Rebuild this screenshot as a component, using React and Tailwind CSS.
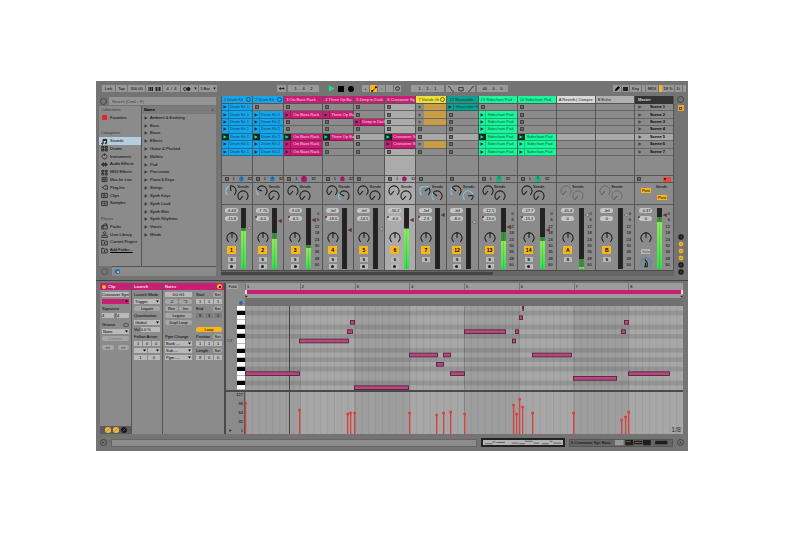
import { useState } from 'react'

const PINK = 'bg-[#c71f73]'
const BLUE = 'bg-[#17a5ea]'
const GREEN = 'bg-[#1bf59b]'

// cells: c = clip, p = playing clip, s = stop slot, g = group slot, . = empty return slot
const TRACKS = [
  { id: '1', name: 'Drum Kit', clip: 'Drum Kit 1', color: BLUE, ink: 'text-[#083f66]', cells: 'ccccpcc', pie: '#1c79c4', peak: '-6.63', vol: '-15.8', level: 62, dim: 68, fader: 29, a: 130, b: 0, group: true },
  { id: '2', name: 'Drum Kit', clip: 'Drum Kit 2', color: BLUE, ink: 'text-[#083f66]', cells: 'scccpcc', pie: '#1c79c4', peak: '-7.70', vol: '-6.0', level: 50, dim: 59, fader: 18, red: true, a: 70, b: 0, group: true },
  { id: '3', name: 'Oxi Bass Rack', clip: 'Oxi Bass Rack', color: PINK, ink: 'text-[#ffdcec]', cells: 'scsspcc', wide: true, pie: '#b01868', peak: '-9.03', vol: '-6.5', level: 34, dim: 40, fader: 16, red: true, a: 0, b: 0 },
  { id: '4', name: 'Three Op Ba', clip: 'Three Op Ba', color: PINK, ink: 'text-[#ffdcec]', cells: 'scsspss', pie: '#b01868', peak: '-Inf', vol: '-18.0', level: 0, dim: 0, fader: 33, red: true, a: 0, b: 80 },
  { id: '5', name: 'Deep in Dark', clip: 'Deep in Dark', color: PINK, ink: 'text-[#ffdcec]', cells: 'sscssss', peak: '-Inf', vol: '-14.5', level: 0, dim: 0, fader: 31, a: 0, b: 0 },
  { id: '6', name: 'Crossover Sy', clip: 'Crossover S', color: PINK, ink: 'text-[#ffdcec]', cells: 'sssspcs', pie: '#b01868', peak: '-10.2', vol: '-6.0', level: 66, dim: 68, fader: 16, red: true, a: 0, b: 0, selected: true },
  { id: '7', name: 'Vocals Gr', clip: '', color: 'bg-[#eee03c]', ink: 'text-[#3d3a10]', cells: 'gggssgs', peak: '-Inf', vol: '-2.6', level: 0, dim: 0, fader: 8, red: true, a: 190, b: 90, noArm: true, group: true },
  { id: '12', name: 'Wavetable', clip: 'Wavetable R', color: 'bg-[#109e90]', ink: 'text-[#05443e]', cells: 'cssssss', peak: '-Inf', vol: '-8.0', level: 0, dim: 0, fader: 19, a: 90, b: 220 },
  { id: '13', name: 'Sidechain Pad', clip: 'Sidechain Pad', color: GREEN, ink: 'text-[#08633e]', cells: 'scccpcc', wide: true, pie: '#14b878', peak: '-12.5', vol: '-13.0', level: 46, dim: 61, fader: 28, red: true, a: 0, b: 0 },
  { id: '14', name: 'Sidechain Pad', clip: 'Sidechain Pad', color: GREEN, ink: 'text-[#08633e]', cells: 'sssspcc', wide: true, pie: '#14b878', peak: '-17.7', vol: '-15.1', level: 46, dim: 53, fader: 32, red: true, a: 0, b: 0 },
  { id: 'A', name: 'Reverb | Compre', clip: '', color: 'bg-[#d9d9d9]', ink: 'text-[#222]', cells: '.......', wide: true, ret: true, peak: '-41.4', vol: '0', level: 3, dim: 17, fader: 8, a: 0, b: 0 },
  { id: 'B', name: 'Echo', clip: '', color: 'bg-[#b0b0b0]', ink: 'text-[#222]', cells: '.......', wide: true, ret: true, peak: '-Inf', vol: '0', level: 0, dim: 0, fader: 8, a: 0, b: 0 },
]

const BROWSER = [
  ['head', 'Collections'], ['red', 'Favorites'], ['', ''], ['head', 'Categories'],
  ['note', 'Sounds'], ['grid', 'Drums'], ['clock', 'Instruments'], ['wave', 'Audio Effects'],
  ['midi', 'MIDI Effects'], ['max', 'Max for Live'], ['plug', 'Plug-Ins'], ['clip', 'Clips'],
  ['sample', 'Samples'], ['', ''], ['head', 'Places'], ['packs', 'Packs'], ['user', 'User Library'],
  ['folder', 'Current Project'], ['folder', 'Add Folder...'],
]

const SOUNDS = [
  'Ambient & Evolving', 'Bass', 'Brass', 'Effects', 'Guitar & Plucked', 'Mallets', 'Pad', 'Percussive',
  'Piano & Keys', 'Strings', 'Synth Keys', 'Synth Lead', 'Synth Misc', 'Synth Rhythmic', 'Voices', 'Winds',
]

// start, end, row
const NOTES = [
  [0, 54, 14], [54, 103, 7], [102, 107, 5], [105, 109, 3], [109, 163, 17], [164, 192, 10], [191, 198, 12],
  [198, 205, 10], [205, 219, 14], [219, 260, 5], [267, 270, 7], [270, 273, 5], [274, 277, 2], [277, 278, 0],
  [287, 326, 10], [328, 371, 15], [376, 380, 5], [379, 383, 3], [383, 424, 14],
]

const VELOCITIES = [
  [0, 31], [54, 24], [102, 20], [105, 21], [109, 21], [164, 21], [191, 19], [198, 21], [205, 22], [219, 20],
  [268, 29], [271, 20], [274, 35], [277, 27], [287, 21], [328, 21], [376, 14], [380, 17], [383, 22],
]

const BLACK_ROWS = [1, 4, 6, 9, 11, 13, 16]
const ROW_H = 84 / 18
const BAR_W = 438 / 8

const ICONS = {
  note: <path d="M3 8V2h5v5M3 8a1 1 0 1 1-1-1h1M8 7.500a1 1 0 1 1-1-1h1M3 3.500h5" strokeWidth="1.400" />,
  grid: <path d="M1 2h3v2.500H1zM6 2h3v2.500H6zM1 6h3v2.500H1zM6 6h3v2.500H6z" strokeWidth="1.300" />,
  clock: <path d="M5 1.500a3.500 3.500 0 1 0 .1 0M5 1v3" />,
  wave: <path d="M0 5h1M2 3v4M3.500 2v6M5 3.500v3M6.500 2v6M8 3v4M9 5h1" strokeWidth="1.200" />,
  midi: <path d="M1 2h3v2H1zM6 2h3v2H6zM1 6.500h3v2H1zM6 6.500h3v2H6zM2.500 4v2M7.500 4v2" />,
  max: <path d="M1.500 2h7v6h-7zM3.500 4h3v2h-3z" />,
  plug: <path d="M1 5h2M3 5l2-2.500h4v5H5z" />,
  clip: <path d="M1 2h8v6H1zM4 3.500v3L6.500 5z" />,
  sample: <path d="M1 2h8v6H1zM3 4v2M5 3.500v3M7 4v2" />,
  packs: <path d="M3 4h6v4.500H1V4h2L4.500 1.500h4L8 4M3 4v4" />,
  user: <path d="M5 1a1.800 1.800 0 1 0 .1 0M1 9V7.500Q1 6 3 6h4q2 0 2 1.500V9z" />,
  folder: <path d="M1 8.500V2h3l1 1h4v5.500zM5 4.500v2.500M4 6h2" />,
}

function BrowserIcon({ name }) {
  if (name === 'red') return <span className="mx-px size-[5px] bg-[#e0262c]" />
  return (
    <svg viewBox="0 0 10 10" className="size-[7px] shrink-0" fill="none" stroke="#1c1c1c" strokeWidth="1.100">
      {ICONS[name]}
    </svg>
  )
}

function Arrow({ color = '#222', className = 'size-[4px]' }) {
  return (
    <svg viewBox="0 0 8 8" className={`${className} shrink-0`}>
      <path d="M1 0.500L7.500 4L1 7.500z" fill={color} />
    </svg>
  )
}

function arc(cx, cy, r, from, to) {
  const p = deg => {
    const a = (deg * Math.PI) / 180
    return `${(cx + r * Math.sin(a)).toFixed(2)} ${(cy - r * Math.cos(a)).toFixed(2)}`
  }
  return `M${p(from)}A${r} ${r} 0 ${to - from > 180 ? 1 : 0} 1 ${p(to)}`
}

function Knob({ amount = 0, pan = false, faded = false, className = '' }) {
  const ink = faded ? '#5c5c5c' : '#1c1c1c'
  const deg = pan ? 0 : -140 + amount
  const a = (deg * Math.PI) / 180
  return (
    <svg viewBox="0 0 20 20" className={`${className} size-[12px] shrink-0`} fill="none">
      <path d={arc(10, 10, 8.5, -140, 140)} stroke={ink} strokeWidth={faded ? 1.2 : 1.8} />
      {amount > 0 && <path d={arc(10, 10, 8.5, -140, deg)} stroke="#8cc4e0" strokeWidth="2.500" />}
      <path d={`M10 10L${10 + 8 * Math.sin(a)} ${10 - 8 * Math.cos(a)}`} stroke={ink} strokeWidth="1.800" />
      {pan && <path d="M8 0h4l-2 2z" fill={ink} />}
    </svg>
  )
}

function Cell({ kind, track, row, onLaunch }) {
  const bg = track.selected ? 'bg-[#ababab]' : row === 4 ? 'bg-[#a9a9a9]' : 'bg-[#8b8b8b]'
  if (kind === '.') return <div className={`${bg} border-b border-[#666]`} />
  if (kind === 's') {
    return (
      <button aria-label={`Stop ${track.id} scene ${row + 1}`} className={`${bg} flex items-center border-b border-[#666] pl-[2px]`}>
        <span className="size-[4px] border border-[#444] bg-[#666]" />
      </button>
    )
  }
  if (kind === 'g') {
    return (
      <div className={`${bg} flex items-center border-b border-[#666] pl-[2px]`}>
        <Arrow color="#555" />
        <span className="ml-[2px] h-full flex-1 bg-[#c89d45]" />
      </div>
    )
  }
  const playing = kind === 'p'
  return (
    <button onClick={onLaunch} className={`${track.color} flex min-w-0 items-center border-b border-black/30 text-left`}>
      <span className={`${playing ? 'bg-[#0d2b20]' : ''} flex h-full w-[7px] shrink-0 items-center justify-center border-r border-black/20`}>
        <Arrow color={playing ? '#2fe08c' : '#10304a'} />
      </span>
      <span className={`${track.ink} ${track.wide ? 'pl-[2px]' : 'pl-px'} whitespace-nowrap`}>{track.clip}</span>
    </button>
  )
}

function Scale() {
  return (
    <div className="flex flex-1 flex-col justify-between pt-[4px] pr-[3px] pb-[3px] text-right leading-none">
      {['0', '6', '12', '18', '24', '30', '36', '48', '60'].map(n => <span key={n}>{n}</span>)}
    </div>
  )
}

function Meter({ level, dim, fader, red }) {
  return (
    <div className="relative mb-px flex w-[5px] shrink-0 flex-col justify-end bg-[#242424]">
      <div className="bg-[#3f8f3e]" style={{ height: `${dim - level}%` }} />
      <div className="bg-linear-to-t from-[#26dd4c] to-[#8aec5c]" style={{ height: `${level}%` }} />
      <span className="absolute inset-y-0 left-[2px] w-px bg-black/10" />
      <svg viewBox="0 0 6 6" className="absolute left-[6px] size-[4px]" style={{ top: `${fader}%` }}>
        <path d="M0 3L5.500 0.300v5.400z" fill={red ? '#7d2432' : '#bcbcbc'} stroke="#4a4a4a" strokeWidth="0.700" />
      </svg>
    </div>
  )
}

function Pill({ children, dot }) {
  return (
    <span className="relative h-[5px] w-[13px] rounded-full bg-[#c6c6c6] text-center leading-[5px]">
      {children}
      {dot && <i className="absolute top-0 -left-px size-[2px] rounded-full bg-[#8d2338]" />}
    </span>
  )
}

function Track({ track, active, onToggle, onLaunch }) {
  const light = track.selected
  const side = track.wide ? 'w-[22px]' : 'w-[19px]'
  return (
    <section className={`${light ? 'bg-[#ababab]' : 'bg-[#8b8b8b]'} flex min-w-0 flex-col border-r border-[#555]`}>
      <h3 className={`${track.color} ${track.ink} flex h-[8px] items-center border-b border-[#555] pl-[2px] whitespace-nowrap`}>
        <span className="min-w-0 flex-1">{track.id} {track.name}</span>
        {track.group && <span className="mr-px size-[5px] shrink-0 rounded-full border border-current opacity-70" />}
      </h3>
      <div className="grid h-[52px] grid-rows-7">
        {track.cells.split('').map((kind, i) => (
          <Cell key={i} kind={kind} track={track} row={i} onLaunch={onLaunch} />
        ))}
      </div>
      <div className="h-[20px] border-b border-[#555]" />
      <div className="flex h-[7px] items-center gap-[4px] border-b border-[#555] pl-[3px]">
        {!track.ret && <span className="size-[4px] border border-[#444] bg-[#666]" />}
        {track.pie && (
          <>
            <span>1</span>
            <svg viewBox="0 0 10 10" className="size-[6px]">
              <circle cx="5" cy="5" r="5" fill={track.pie} />
              <path d="M5 5V0" stroke="#333" />
            </svg>
            <span>32</span>
          </>
        )}
      </div>
      <div className="flex h-[22px] border-b border-[#555] pl-[3px]">
        <Knob amount={track.a} faded={track.ret} className="mt-[2px]" />
        <div className="flex flex-col items-center pt-[2px]">
          <span>Sends</span>
          <Knob amount={track.b} faded={track.ret} className="mt-px" />
        </div>
      </div>
      <div className="flex h-[65px] pt-[3px]">
        <div className={`${side} flex flex-col items-center`}>
          <Pill>{track.peak}</Pill>
          <span className="h-[3px]" />
          <Pill dot={track.red}>{track.vol}</Pill>
          <Knob pan className="mt-[11px] mb-[2px]" />
          <button
            onClick={onToggle}
            aria-pressed={active}
            className={`${active ? 'bg-[#f9b51c]' : 'bg-[#9a9a9a]'} h-[8px] w-[9px] text-[5px] leading-none font-bold`}
          >
            {track.id}
          </button>
          <button className="mt-[3px] h-[5px] w-[8px] bg-[#b9b9b9] leading-none font-bold">S</button>
          {!track.ret && !track.noArm && (
            <button aria-label={`Arm track ${track.id}`} className="mt-[2px] flex h-[5px] w-[8px] items-center justify-center bg-[#b9b9b9]">
              <span className="size-[3px] rounded-full bg-[#222]" />
            </button>
          )}
        </div>
        <Meter {...track} />
        {track.wide && <Scale />}
      </div>
    </section>
  )
}

function Master() {
  return (
    <section className="flex min-w-0 flex-col border-r border-[#555] bg-[#8b8b8b]">
      <h3 className="flex h-[8px] items-center bg-[#333] pl-[3px] font-bold text-[#d0d0d0]">Master</h3>
      <div className="grid h-[52px] grid-rows-7">
        {[1, 2, 3, 4, 5, 6, 7].map(n => (
          <button key={n} className={`${n === 5 ? 'bg-[#a9a9a9]' : ''} flex items-center border-b border-[#666] pl-[3px] font-bold`}>
            <Arrow color="#444" />
            <span className="flex-1 text-center">Scene {n}</span>
          </button>
        ))}
      </div>
      <div className="h-[20px] border-b border-[#555]" />
      <div className="flex h-[7px] items-center justify-between border-b border-[#555] px-[2px]">
        <span className="size-[4px] border border-[#444] bg-[#666]" />
        <span className="flex h-[5px] w-[8px] items-center bg-[#e44a3c] pl-px"><i className="size-[2px] bg-[#611]" /></span>
      </div>
      <div className="flex h-[22px] flex-col border-b border-[#555] px-[6px] pt-[2px]">
        <div className="flex items-start justify-between">
          <button className="mt-[3px] h-[5px] w-[10px] bg-[#f9b51c] leading-[5px]">Post</button>
          <span>Sends</span>
        </div>
        <button className="mt-[2px] h-[5px] w-[10px] self-end bg-[#f9b51c] leading-[5px]">Post</button>
      </div>
      <div className="flex h-[65px] pt-[3px]">
        <div className="flex w-[22px] flex-col items-center">
          <Pill>-0.37</Pill>
          <span className="h-[3px]" />
          <Pill dot>0</Pill>
          <Knob pan className="mt-[11px]" />
          <button className="mt-[5px] h-[5px] w-[9px] bg-[#b9b9b9] leading-[5px] text-[#555]">Solo</button>
          <svg viewBox="0 0 20 20" className="mt-[3px] size-[12px]" fill="none">
            <path d={arc(10, 10, 8.5, -140, 140)} stroke="#4e86bd" strokeWidth="2" />
            <path d="M8 4l4 5v7M9 9v6M7 16h6" stroke="#222" strokeWidth="2" />
          </svg>
        </div>
        <Meter level={77} dim={86} fader={8} red />
        <Scale />
      </div>
    </section>
  )
}

function Box({ children, className = '' }) {
  return <span className={`${className} flex h-[7px] items-center justify-center bg-[#999] whitespace-nowrap`}>{children}</span>
}

function Toolbar() {
  const [playing, setPlaying] = useState(true)
  return (
    <header className="flex h-[15px] items-center pl-[6px] pr-[2px]">
      <div className="flex gap-px">
        <button className="h-[7px] w-[13px] bg-[#999]">Link</button>
        <button className="h-[7px] w-[11px] bg-[#999]">Tap</button>
        <Box className="w-[17px]">100.00</Box>
        <Box className="w-[16px] gap-[2px]">
          <svg viewBox="0 0 24 8" className="h-[4px] w-[13px]" fill="#222"><path d="M0 0h2v8H0zM3 0h3v8H3zM7 0h2v8H7zM14 0h3v8h-3zM18 0h2v8h-2zM21 0h3v8h-3z" /></svg>
        </Box>
        <Box className="w-[17px]">4 &nbsp;/ &nbsp;4</Box>
        <Box className="w-[17px] gap-[3px]">
          <svg viewBox="0 0 16 8" className="h-[4px] w-[8px]"><circle cx="4" cy="4" r="3" fill="none" stroke="#222" strokeWidth="1.500" /><circle cx="11" cy="4" r="4" fill="#222" /></svg>
          <Arrow className="size-[3px] rotate-90" />
        </Box>
        <Box className="w-[18px] gap-[3px]">1 Bar <Arrow className="size-[3px] rotate-90" /></Box>
      </div>
      <div className="ml-[60px] flex items-center gap-[2px]">
        <Box className="w-[9px]"><svg viewBox="0 0 12 6" className="h-[3px] w-[6px]"><path d="M0 3h8" stroke="#222" strokeWidth="1.500" /><path d="M0 3l4-3v6z" fill="#222" /><circle cx="9" cy="3" r="2" fill="#222" /></svg></Box>
        <Box className="w-[31px]">1 . &nbsp; 4 . &nbsp; 2</Box>
        <button onClick={() => setPlaying(!playing)} aria-label="Play" className="ml-[6px] flex size-[8px] items-center justify-center">
          <Arrow color={playing ? '#1de28a' : '#222'} className="size-[7px]" />
        </button>
        <button aria-label="Stop" className="flex size-[8px] items-center justify-center"><span className="size-[6px] bg-black" /></button>
        <button aria-label="Record" className="flex size-[8px] items-center justify-center"><span className="size-[6px] rounded-full bg-black" /></button>
        <div className="ml-[5px] flex gap-px">
          <Box className="w-[7px]">+</Box>
          <span className="flex h-[7px] w-[7px] items-center justify-center bg-[#f9b51c]">
            <svg viewBox="0 0 8 8" className="size-[6px]"><path d="M1 7L4 5L7 1" stroke="#222" fill="none" /><circle cx="1.500" cy="6.500" r="1.300" /><circle cx="6.500" cy="1.500" r="1.300" /></svg>
          </span>
          <Box className="w-[7px] text-[#555]">+</Box>
          <Box className="w-[7px] text-[#777]">--</Box>
          <Box className="w-[7px]"><svg viewBox="0 0 8 8" className="size-[5px]"><circle cx="4" cy="4" r="3" fill="none" stroke="#222" strokeWidth="1.500" /></svg></Box>
        </div>
        <Box className="ml-[8px] w-[33px]">1 . &nbsp; 1 . &nbsp; 1</Box>
        <Box className="w-[29px] gap-[4px]">
          <svg viewBox="0 0 8 8" className="size-[6px]" fill="none" stroke="#222"><path d="M0 1h2l4 6h2" /></svg>
          <svg viewBox="0 0 8 8" className="size-[6px]" fill="none" stroke="#222"><path d="M3 6H1V2h6v4H5M4 5v3" /></svg>
          <svg viewBox="0 0 8 8" className="size-[6px]" fill="none" stroke="#222"><path d="M0 7h2l4-6h2" /></svg>
        </Box>
        <Box className="w-[31px]">40 . &nbsp; 0 . &nbsp; 0</Box>
      </div>
      <div className="ml-auto flex gap-px">
        <Box className="w-[8px]"><svg viewBox="0 0 8 8" className="size-[6px]"><path d="M1 7l1-3 4-4 2 2-4 4z" /></svg></Box>
        <Box className="w-[7px]"><span className="h-[4px] w-[5px] bg-[#222]" /></Box>
        <button className="h-[7px] w-[11px] bg-[#999]">Key</button>
        <Box className="w-[3px]" />
        <button className="h-[7px] w-[12px] bg-[#999]">MIDI</button>
        <Box className="w-[15px] border-l-3 border-[#f3b435]">18 %</Box>
        <Box className="w-[7px]">D</Box>
        <Box className="w-[3px]" />
      </div>
    </header>
  )
}

function Browser() {
  const [active, setActive] = useState('Sounds')
  return (
    <aside className="flex w-[117px] shrink-0 flex-col">
      <div className="flex h-[10px] items-center gap-[2px] pl-px">
        <span className="size-[7px] rounded-full border border-[#444]" />
        <input
          aria-label="Search"
          placeholder="Search (Cmd + F)"
          className="h-[8px] min-w-0 flex-1 bg-[#949494] px-[3px] placeholder-[#3f3f3f] outline-none"
        />
      </div>
      <div className="flex flex-1 bg-[#8b8b8b]">
        <nav className="grid h-[148px] w-[42px] shrink-0 grid-rows-19">
          {BROWSER.map(([icon, label], i) => {
            if (!icon) return <span key={i} />
            if (icon === 'head') return <h2 key={i} className="flex items-center pl-[2px] text-[#3c3c3c]">{label}</h2>
            return (
              <button
                key={i}
                onClick={() => setActive(label)}
                className={`${active === label ? 'bg-[#b5cddd]' : ''} flex items-center gap-[2px] pl-[2px] text-left whitespace-nowrap`}
              >
                <BrowserIcon name={icon} />
                <span className={label.startsWith('Add') ? 'underline' : ''}>{label}</span>
              </button>
            )
          })}
        </nav>
        <div className="flex-1 border-l border-[#555]">
          <ul className="grid h-[133px] grid-rows-17">
            <li className="flex items-center justify-between bg-[#7b7b7b] px-[2px] font-bold">
              Name <Arrow color="#555" className="size-[3px] -rotate-90" />
            </li>
            {SOUNDS.map(name => (
              <li key={name} className="flex items-center gap-[2px] pl-[2px]">
                <Arrow color="#3a3a3a" />{name}
              </li>
            ))}
          </ul>
        </div>
      </div>
      <div className="flex h-[10px] items-center gap-[4px] pl-[2px]">
        <span className="size-[7px] rounded-full border border-[#555]" />
        <div className="flex h-full flex-1 items-center border-t border-[#555] bg-[#8b8b8b] pl-[3px]">
          <span className="flex size-[5px] items-center justify-center rounded-full bg-[#2468b0]"><i className="size-[2px] bg-[#8fbde8]" /></span>
        </div>
      </div>
    </aside>
  )
}

function Session() {
  const [off, setOff] = useState([])
  const [, setLaunched] = useState(null)
  function toggle(id) {
    setOff(off.includes(id) ? off.filter(x => x !== id) : [...off, id])
  }
  return (
    <div className="flex min-w-0 flex-1">
      <div className="min-w-0 flex-1">
        <div className="grid grid-cols-[31fr_31fr_39fr_31fr_31fr_31fr_31fr_31fr_39fr_39fr_39fr_39fr_39fr] border-l border-[#555]">
          {TRACKS.map(t => (
            <Track key={t.id} track={t} active={!off.includes(t.id)} onToggle={() => toggle(t.id)} onLaunch={() => setLaunched(t.id)} />
          ))}
          <Master />
        </div>
        <div className="h-[6px] border-t border-[#4a4a4a] bg-[#666] pt-px">
          <div className="h-[3px] w-3/5 bg-[#444]" />
        </div>
      </div>
      <div className="flex w-[13px] shrink-0 flex-col items-center gap-[2px] pb-px">
        <span className="size-[7px] rounded-full border border-[#444]" />
        <span className="flex size-[6px] items-center justify-center bg-[#e2a93a]"><i className="size-[3px] border border-[#6b5220]" /></span>
        <div className="mt-auto flex flex-col gap-px">
          {['#1c1c1c', '#f2b93b', '#f2b93b', '#f2b93b', '#1c1c1c', '#1c1c1c'].map((c, i) => (
            <svg key={i} viewBox="0 0 10 10" className="size-[6px]">
              <circle cx="5" cy="5" r="4.500" fill={c} stroke="#333" strokeWidth="0.500" />
              <path d="M3 5h4" stroke={c === '#1c1c1c' ? '#777' : '#6b5220'} />
            </svg>
          ))}
        </div>
      </div>
    </div>
  )
}

function Line({ children }) {
  return <div className="flex h-[7px] items-center gap-px whitespace-nowrap">{children}</div>
}

function Btn({ children, on }) {
  return (
    <button className={`${on ? 'bg-[#f9b51c]' : 'bg-[#a6a6a6]'} h-[5px] min-w-0 flex-1 rounded-[2px] leading-[5px]`}>
      {children}
    </button>
  )
}

function Field({ label, value }) {
  return (
    <input
      aria-label={label}
      defaultValue={value}
      className="h-[5px] min-w-0 flex-1 bg-[#b9b9b9] outline-none"
    />
  )
}

function Pick({ label, value, color = 'bg-[#b9b9b9]' }) {
  return (
    <span className={`${color} relative flex h-[5px] min-w-0 flex-1 items-center`}>
      <select aria-label={label} className="h-full w-full appearance-none px-px leading-none">
        <option>{value}</option>
      </select>
      <svg viewBox="0 0 6 6" className="pointer-events-none absolute right-px size-[3px]"><path d="M0 1h6L3 5z" /></svg>
    </span>
  )
}

function Title({ children, set }) {
  return (
    <Line>
      <span className="flex-1">{children}</span>
      {set && <button className="h-[5px] w-[9px] rounded-[2px] bg-[#a8a8a8] leading-[5px]">Set</button>}
    </Line>
  )
}

function Triple({ label, values, dark }) {
  return (
    <Line>
      {values.map((v, i) => (
        <input
          key={i}
          aria-label={`${label} ${i + 1}`}
          defaultValue={v}
          className={`${dark ? 'bg-[#7c7c7c]' : 'bg-[#b9b9b9]'} h-[5px] min-w-0 flex-1 text-center outline-none`}
        />
      ))}
    </Line>
  )
}

function ClipPanel() {
  return (
    <div className="flex w-[124px] shrink-0 bg-[#8b8b8b]">
      <section className="flex w-[32px] flex-col border-r border-[#555]">
        <h3 className={`${PINK} flex h-[7px] items-center gap-[2px] pl-[2px] font-bold text-[#fbd9ea]`}>
          <span className="size-[4px] rounded-full bg-[#f9b51c]" />Clip
        </h3>
        <div className="px-[2px] pt-px">
          <Line><Field label="Clip name" value="Crossover Synt" /></Line>
          <Line><Pick label="Clip color" value="" color={PINK} /></Line>
          <Title>Signature</Title>
          <Line><Field label="Numerator" value="4" />/<Field label="Denominator" value="4" /></Line>
          <div className="pt-[2px]">
            <Line><span className="flex-1">Groove</span><span className="h-[4px] w-[6px] rounded-full border border-[#555]" /></Line>
            <Line><Pick label="Groove" value="None" /></Line>
            <Line><Btn><span className="text-[#777]">Commit</span></Btn></Line>
          </div>
          <div className="pt-[2px]">
            <Line><Btn>&lt;&lt;</Btn><span className="w-[2px]" /><Btn>&gt;&gt;</Btn></Line>
          </div>
        </div>
        <div className="mt-auto flex h-[8px] items-center justify-center gap-[2px] bg-[#5c5c5c]">
          {['#f2b93b', '#f2b93b', '#1c1c1c'].map((c, i) => (
            <svg key={i} viewBox="0 0 10 10" className="size-[6px]">
              <circle cx="5" cy="5" r="5" fill={c} />
              <path d="M3 7l4-4" stroke={i === 2 ? '#888' : '#7a5a1a'} />
            </svg>
          ))}
        </div>
      </section>
      <section className="w-[31px] border-r border-[#555]">
        <h3 className={`${PINK} flex h-[7px] items-center pl-[2px] font-bold text-[#fbd9ea]`}>Launch</h3>
        <div className="px-[2px] pt-px">
          <Title>Launch Mode</Title>
          <Line><Pick label="Launch mode" value="Trigger" /></Line>
          <Line><Btn>Legato</Btn></Line>
          <Title>Quantization</Title>
          <Line><Pick label="Quantization" value="Global" /></Line>
          <Line>Vel <Field label="Velocity amount" value="0.0 %" /></Line>
          <Title>Follow Action</Title>
          <Triple label="Follow time" values={['1', '0', '0']} />
          <Line><Pick label="Action A" value="" /><Pick label="Action B" value="" /></Line>
          <Triple label="Chance" values={['1', '0']} />
        </div>
      </section>
      <section className="min-w-0 flex-1">
        <h3 className={`${PINK} flex h-[7px] items-center justify-between px-[2px] font-bold text-[#fbd9ea]`}>
          Notes
          <span className="flex size-[5px] items-center justify-center rounded-full bg-[#f9b51c]"><i className="size-[2px] bg-[#222]" /></span>
        </h3>
        <div className="flex gap-[4px] px-[2px] pt-px">
          <div className="w-[27px] shrink-0">
            <Triple label="Note range" values={['D0-G1']} />
            <Line><Btn>:2</Btn><Btn>*2</Btn></Line>
            <Line><Btn>Rev</Btn><Btn>Inv</Btn></Line>
            <Line><Btn>Legato</Btn></Line>
            <Line><Btn>Dupl.Loop</Btn></Line>
            <Line />
            <Title>Pgm Change</Title>
            <Line><Pick label="Bank" value="Bank ---" /></Line>
            <Line><Pick label="Sub-bank" value="Sub ---" /></Line>
            <Line><Pick label="Program" value="Pgm ---" /></Line>
          </div>
          <div className="min-w-0 flex-1">
            <Title set>Start</Title>
            <Triple label="Start" values={['1', '1', '1']} />
            <Title set>End</Title>
            <Triple label="End" values={['9', '1', '1']} dark />
            <Line />
            <Line><Btn on>Loop</Btn></Line>
            <Title set>Position</Title>
            <Triple label="Position" values={['1', '1', '1']} />
            <Title set>Length</Title>
            <Triple label="Length" values={['8', '0', '0']} />
          </div>
        </div>
      </section>
    </div>
  )
}

function Grid({ height }) {
  return (
    <>
      {[0, 2, 4, 6].map(i => <rect key={i} x={i * BAR_W} width={BAR_W} height={height} fill="#000" opacity="0.05" />)}
      {Array.from({ length: 64 }, (_, i) => (
        <rect key={i} x={(i * BAR_W) / 8} width="1" height={height} fill="#000" opacity={i % 8 ? 0.06 : 0.16} />
      ))}
    </>
  )
}

function PianoRoll() {
  return (
    <div className="min-w-0 flex-1 border-l-2 border-[#4a4a4a] bg-[#8b8b8b]">
      <div className="flex">
        <div className="flex h-[23px] w-[19px] shrink-0 flex-col justify-between">
          <button className="mt-px ml-px h-[5px] w-[11px] bg-[#a5a5a5] leading-[5px]">Fold</button>
          <span className="mb-px ml-[13px] size-[4px] rounded-full bg-[#2468b0]" />
        </div>
        <div className="min-w-0 flex-1">
          <div className="grid h-[7px] grid-cols-8 bg-[#9c9c9c]">
            {[1, 2, 3, 4, 5, 6, 7, 8].map(n => <span key={n} className="border-l border-[#777] pt-[2px] pl-px leading-none">{n}</span>)}
          </div>
          <div className={`${PINK} flex h-[4px] justify-between`}>
            <i className="w-[2px] bg-[#ddd]" /><i className="w-[2px] bg-[#ddd]" />
          </div>
          <div className="flex h-[4px] items-center justify-between bg-[#9c9c9c]">
            <Arrow className="size-[3px]" /><Arrow className="size-[3px] rotate-180" />
          </div>
          <div className="h-[8px] bg-[#707070]" />
        </div>
      </div>
      <div className="flex h-[84px]">
        <div className="flex w-[11px] shrink-0 flex-col pt-[33px] pl-px text-[#333]">C3</div>
        <div className="flex w-[8px] shrink-0 flex-col">
          {Array.from({ length: 18 }, (_, i) => (
            <span key={i} className={`${BLACK_ROWS.includes(i) ? 'bg-black' : 'border-b border-[#bbb] bg-white'} flex-1`} />
          ))}
        </div>
        <svg viewBox="0 0 438 84" preserveAspectRatio="none" className="h-full min-w-0 flex-1 bg-[#a7a7a7]">
          {BLACK_ROWS.map(r => <rect key={r} y={r * ROW_H} width="438" height={ROW_H} fill="#949494" />)}
          <Grid height={84} />
          <rect x="44" width="1" height="84" fill="#444" />
          {NOTES.map(([x, end, row]) => (
            <rect key={x} x={x + 0.5} y={row * ROW_H + 0.5} width={end - x} height="3.700" fill="#b34a7c" stroke="#5f1e40" strokeWidth="0.900" />
          ))}
        </svg>
      </div>
      <div className="relative flex h-[44px] border-t-2 border-[#4a4a4a]">
        <div className="flex w-[19px] shrink-0 justify-between border-r border-[#555]">
          <span className="self-end pb-[2px] pl-[3px]"><Arrow className="size-[3px]" /></span>
          <div className="flex flex-col justify-between pt-px pr-px pb-px text-right leading-none">
            {[127, 96, 64, 32, 1].map(n => <span key={n}>{n}</span>)}
          </div>
        </div>
        <svg viewBox="0 0 438 42" preserveAspectRatio="none" className="h-full min-w-0 flex-1 bg-[#a7a7a7]">
          <Grid height={42} />
          <rect x="44" width="1" height="42" fill="#444" />
          {VELOCITIES.map(([x, h]) => (
            <g key={x} fill="#d9413c">
              <rect x={x} y={42 - h} width="1.300" height={h} />
              <circle cx={x + 0.6} cy={42 - h} r="1.500" />
            </g>
          ))}
        </svg>
        <span className="absolute right-[2px] bottom-px text-[7px] leading-none text-[#333]">1/8</span>
      </div>
    </div>
  )
}

function StatusBar() {
  return (
    <footer className="flex h-[17px] items-center gap-[4px] px-[4px]">
      <span className="flex size-[7px] items-center justify-center rounded-full border border-[#444]"><Arrow color="#444" className="size-[3px]" /></span>
      <div className="h-[8px] flex-1 border border-[#666] bg-[#8b8b8b]" />
      <svg viewBox="0 0 84 8" preserveAspectRatio="none" className="h-[9px] w-[84px] border-2 border-[#222] bg-[#b5b5b5]" fill="none" stroke="#444">
        <path d="M2 6h8M10 3h3M14 4h9M30 5h7M38 6h6M44 2h8M53 5h6M62 6h7M70 2h3M74 5h8" strokeWidth="0.900" />
      </svg>
      <div className="flex h-[8px] w-[104px] items-center gap-px border border-[#555] bg-[#666] pl-px whitespace-nowrap">
        6 Crossover Syn Bass
        <svg viewBox="0 0 62 8" className="ml-auto h-[7px] w-[60px]">
          <path d="M0 1h10v6H0z" fill="#999" />
          <path d="M12 1h9v6h-9zM22 2h9v4h-9zM32 1h9v6h-9zM46 2h14v4H46z" fill="#1f1f1f" />
          <path d="M13 3h5M23 4h7" stroke="#8a6a3a" />
        </svg>
      </div>
      <span className="flex size-[7px] items-center justify-center rounded-full border border-[#444]"><Arrow color="#444" className="size-[3px] -rotate-90" /></span>
    </footer>
  )
}

export default function App() {
  return (
    <div className="min-h-screen bg-white pt-[81px] pr-28 pl-24">
      <main className="bg-[#747474] font-['Liberation_Sans',Arial,sans-serif] text-[4px] leading-none text-black">
        <Toolbar />
        <div className="flex gap-[5px] pr-px pl-[3px]">
          <Browser />
          <Session />
        </div>
        <div className="mt-[4px] border-t border-[#444]" />
        <div className="flex pt-[2px] pr-[5px] pl-[4px]">
          <ClipPanel />
          <PianoRoll />
        </div>
        <StatusBar />
      </main>
    </div>
  )
}
